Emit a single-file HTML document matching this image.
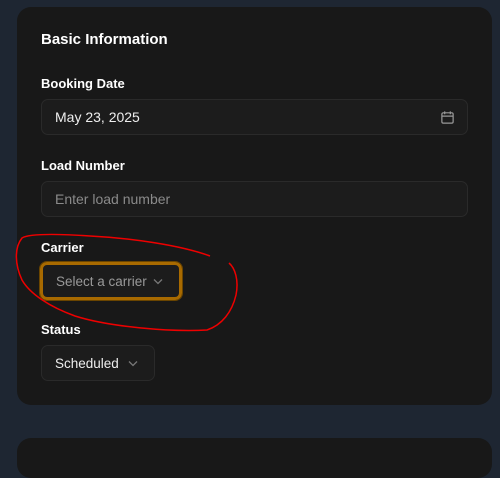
<!DOCTYPE html>
<html><head><style>
body{margin:0;width:500px;height:452px;background:#1e2632;font-family:"Liberation Sans",sans-serif;position:relative;overflow:hidden}
.card{position:absolute;left:17px;top:7px;width:475px;height:398px;background:#181818;border-radius:14px}
.card2{position:absolute;left:17px;top:438px;width:475px;height:40px;background:#181818;border-radius:14px}
.t{position:absolute;color:#fff;font-weight:bold}
.box{position:absolute;background:#1c1c1c;border:1px solid #2a2a2a;border-radius:7px;box-sizing:border-box;font-size:14px;display:flex;align-items:center;padding-left:13px}
</style></head><body>
<div class="card"></div><div class="card2"></div>
<div class="t" style="left:41px;top:31px;font-size:15px">Basic Information</div>
<div class="t" style="left:41px;top:76px;font-size:13px">Booking Date</div>
<div class="box" style="left:41px;top:99px;width:427px;height:36px;color:#eee">May 23, 2025
<svg style="position:absolute;right:12px;top:10px" width="15" height="15" viewBox="0 0 16 16" fill="none" stroke="#999" stroke-width="1.3"><rect x="2" y="3" width="12" height="11" rx="1.5"/><path d="M2 6.5h12M5 1.5v3M11 1.5v3"/></svg></div>
<div class="t" style="left:41px;top:158px;font-size:13px">Load Number</div>
<div class="box" style="left:41px;top:181px;width:427px;height:36px;color:#8a8a8a">Enter load number</div>
<div class="t" style="left:41px;top:240px;font-size:13px">Carrier</div>
<div class="box" style="left:40px;top:262px;width:142px;height:38px;border:3px solid #a86a00;outline:1px solid #6a4500;color:#999;font-size:13.5px">Select a carrier
<svg style="position:absolute;right:16px;top:13px" width="10" height="7" viewBox="0 0 10 7" fill="none" stroke="#777" stroke-width="1.3"><path d="M1 1.5l4 4 4-4"/></svg></div>
<div class="t" style="left:41px;top:322px;font-size:13px">Status</div>
<div class="box" style="left:41px;top:345px;width:114px;height:36px;color:#eee;font-size:13.5px">Scheduled
<svg style="position:absolute;right:16px;top:14px" width="10" height="7" viewBox="0 0 10 7" fill="none" stroke="#777" stroke-width="1.3"><path d="M1 1.5l4 4 4-4"/></svg></div>
<svg style="position:absolute;left:0;top:0" width="500" height="452"><path d="M210 256 C180 245 130 238 90 236 C60 234 30 233 22 238 C14 248 15 265 22 280 C30 294 50 307 75 316 C110 327 170 332 207 330 C222 325 232 312 236 295 C239 280 235 268 229 263" fill="none" stroke="#e00" stroke-width="1.5"/></svg>
</body></html>
